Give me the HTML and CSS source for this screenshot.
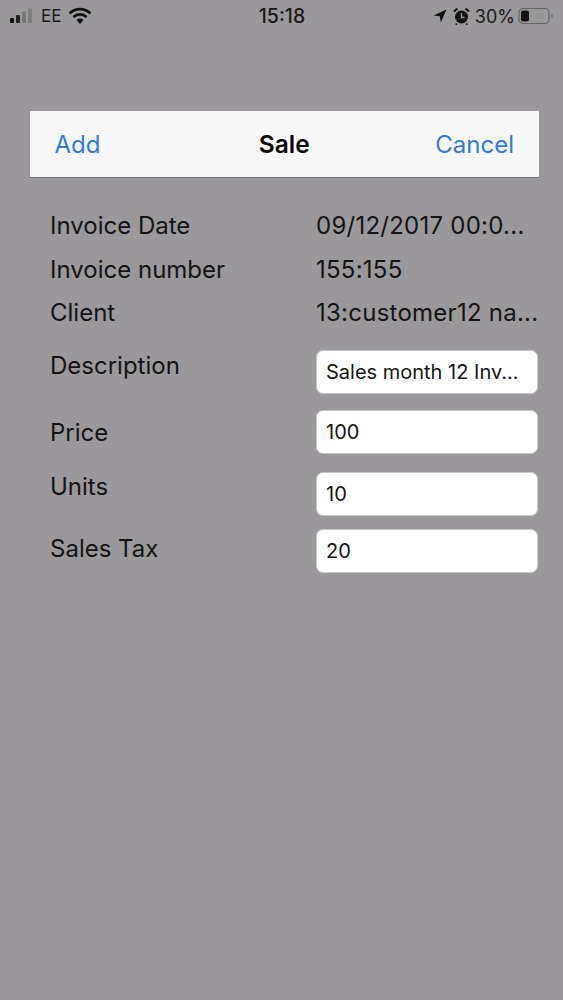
FILE: index.html
```html
<!DOCTYPE html>
<html lang="en">
<head>
<meta charset="utf-8">
<title>Sale</title>
<link rel="stylesheet" href="styles.css">
</head>
<body>
<div class="status">
  <div class="status-left">
    <svg class="signal" width="24" height="16" viewBox="0 0 24 16"><rect x="0" y="10" width="4" height="5" rx="1" fill="#111"/><rect x="6" y="7" width="4" height="8" rx="1" fill="#222"/><rect x="12" y="3.500" width="4" height="11.500" rx="1" fill="#777"/><rect x="18" y="0.500" width="4" height="14.500" rx="1" fill="#7d7c7e"/></svg>
    <span class="carrier">EE</span>
    <svg class="wifi" width="24" height="18" viewBox="0 0 24 18"><path d="M1.500 6.500 A15 15 0 0 1 22.500 6.500" fill="none" stroke="#111" stroke-width="2.800"/><path d="M5.500 10 A9.500 9.500 0 0 1 18.500 10" fill="none" stroke="#111" stroke-width="2.800"/><path d="M8.500 13 L12 17 L15.500 13 A5 5 0 0 0 8.500 13Z" fill="#111"/></svg>
  </div>
  <span class="clock">15:18</span>
  <div class="status-right">
    <svg width="14" height="14" viewBox="0 0 14 14"><path d="M13.500 0.500 L0.500 6.500 L6.800 7.300 L7.800 13.500Z" fill="#111"/></svg>
    <svg class="alarm" width="17" height="18" viewBox="0 0 17 18"><circle cx="8.500" cy="10" r="6.500" fill="#111"/><path d="M1 4.500 L4.500 1.500 M12.500 1.500 L16 4.500" stroke="#111" stroke-width="2.200" fill="none"/><path d="M3.800 16.500 L2.800 17.800 M13.200 16.500 L14.200 17.800" stroke="#111" stroke-width="1.500"/><path d="M8.500 6 V10.500 H11.500" stroke="#9a989b" stroke-width="1.400" fill="none"/></svg>
    <span class="percent">30%</span>
    <svg width="36" height="18" viewBox="0 0 36 18"><rect x="1" y="1.500" width="30" height="15" rx="4" fill="none" stroke="#666" stroke-width="1.200"/><rect x="3" y="3.500" width="8" height="11" rx="2" fill="#111"/><path d="M33.500 6.500 C35 7 35 11 33.500 11.500Z" fill="#666"/></svg>
  </div>
</div>
<div class="toolbar">
  <span class="action">Add</span>
  <span class="title">Sale</span>
  <span class="action action-end">Cancel</span>
</div>
<div class="form">
  <div class="row row-text"><span class="label">Invoice Date</span><span class="value">09/12/2017 00:0...</span></div>
  <div class="row row-text"><span class="label">Invoice number</span><span class="value">155:155</span></div>
  <div class="row row-text"><span class="label">Client</span><span class="value">13:customer12 na...</span></div>
  <div class="row row-desc"><span class="label">Description</span><div class="field">Sales month 12 Inv...</div></div>
  <div class="row row-price"><span class="label">Price</span><div class="field">100</div></div>
  <div class="row row-units"><span class="label">Units</span><div class="field">10</div></div>
  <div class="row row-tax"><span class="label">Sales Tax</span><div class="field">20</div></div>
</div>
</body>
</html>
```
FILE: styles.css
```css
* { box-sizing: border-box; }
html, body { margin: 0; height: 100%; }
body {
  background: #9a989b;
  font-family: Inter, "Liberation Sans", sans-serif;
  color: #141414;
  width: 563px;
  height: 1000px;
  overflow: hidden;
}
.status {
  height: 32px;
  padding: 0 9px 0 10px;
  display: grid;
  grid-template-columns: 1fr auto 1fr;
  align-items: center;
  color: #1a1a1a;
}
.status-left { display: flex; align-items: center; gap: 7px; }
.status-right { display: flex; align-items: center; justify-content: flex-end; gap: 3px; }
.carrier { font-size: 17px; }
.clock { font-size: 19.500px; font-weight: 500; }
.percent { font-size: 18px; margin-left: 2px; }
.alarm { margin-left: 3px; }
.toolbar {
  margin: 79px 24px 0 30px;
  height: 67px;
  padding: 0 25px 0 24.500px;
  background: #f8f8f9;
  border-bottom: 1px solid #77767a;
  display: grid;
  grid-template-columns: 1fr auto 1fr;
  align-items: center;
}
.action { font-size: 24px; color: #2f7ae0; }
.action-end { text-align: right; }
.title { font-size: 24.500px; font-weight: 600; color: #050505; }
.form { padding: 26px 25px 0 50px; display: flex; flex-direction: column; }
.row { display: grid; grid-template-columns: 265.500px 222.500px; align-items: center; font-size: 24px; }
.row-text { height: 43.500px; }
.label { white-space: nowrap; }
.value { white-space: nowrap; padding-left: 0.500px; letter-spacing: 0.250px; }
.field {
  height: 44px;
  padding: 0 9.500px;
  display: flex;
  align-items: center;
  background: #fff;
  border: 1px solid #c8c7ca;
  border-radius: 7px;
  font-size: 20px;
  white-space: nowrap;
  overflow: hidden;
}
.row-desc { margin-top: 15px; }
.row-desc .label { padding-bottom: 12px; }
.row-price { margin-top: 16px; }
.row-price .label { padding-top: 2px; }
.row-units { margin-top: 18px; }
.row-units .label { padding-bottom: 14px; }
.row-tax { margin-top: 13px; }
.row-tax .label { padding-bottom: 4px; }
```
